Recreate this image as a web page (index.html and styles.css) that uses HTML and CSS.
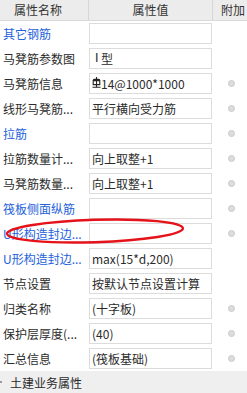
FILE: index.html
```html
<!DOCTYPE html>
<html>
<head>
<meta charset="utf-8">
<link rel="stylesheet" href="styles.css">
</head>
<body>
<div class="panel">
  <div class="head">
    <div class="hc hc-name">属性名称</div>
    <div class="hc hc-val">属性值</div>
    <div class="hc hc-ext">附加</div>
  </div>
  <div class="row"><div class="name blue">其它钢筋</div><div class="val"></div><div class="ext"></div></div>
  <div class="row"><div class="name">马凳筋参数图</div><div class="val"><span class="roman">Ⅰ</span>型</div><div class="ext"></div></div>
  <div class="row"><div class="name">马凳筋信息</div><div class="val"><svg class="bar" width="9" height="11" viewBox="0 0 9 11"><path d="M4.5 0V10.5M0.5 10.2H8.5M1.2 3.6V7.6H7.8V3.6ZM1.2 3.6Q1.2 2.4 2.4 2.4H6.6Q7.8 2.4 7.8 3.6" fill="none" stroke="#222" stroke-width="1.1"/></svg>14@1000*1000</div><div class="ext"><i class="dot"></i></div></div>
  <div class="row"><div class="name">线形马凳筋...</div><div class="val">平行横向受力筋</div><div class="ext"><i class="dot"></i></div></div>
  <div class="row"><div class="name blue">拉筋</div><div class="val"></div><div class="ext"><i class="dot"></i></div></div>
  <div class="row"><div class="name">拉筋数量计...</div><div class="val">向上取整+1</div><div class="ext"><i class="dot"></i></div></div>
  <div class="row"><div class="name">马凳筋数量...</div><div class="val">向上取整+1</div><div class="ext"><i class="dot"></i></div></div>
  <div class="row"><div class="name blue">筏板侧面纵筋</div><div class="val"></div><div class="ext"><i class="dot"></i></div></div>
  <div class="row"><div class="name blue">U形构造封边...</div><div class="val"></div><div class="ext"><i class="dot"></i></div></div>
  <div class="row"><div class="name blue">U形构造封边...</div><div class="val">max(15*d,200)</div><div class="ext"></div></div>
  <div class="row"><div class="name">节点设置</div><div class="val">按默认节点设置计算</div><div class="ext"></div></div>
  <div class="row"><div class="name">归类名称</div><div class="val">(十字板)</div><div class="ext"><i class="dot"></i></div></div>
  <div class="row"><div class="name">保护层厚度(...</div><div class="val">(40)</div><div class="ext"><i class="dot"></i></div></div>
  <div class="row"><div class="name">汇总信息</div><div class="val">(筏板基础)</div><div class="ext"><i class="dot"></i></div></div>
  <div class="group"><i class="gdot"></i><span>土建业务属性</span></div>
  <svg class="mark" width="247" height="393" viewBox="0 0 247 393"><ellipse cx="95" cy="231" rx="88" ry="11.2" transform="rotate(-1.8 95 231)" fill="none" stroke="#e5121a" stroke-width="2.4"/></svg>
</div>
</body>
</html>
```
FILE: styles.css
```css
html, body {
  margin: 0;
  padding: 0;
  background: #ffffff;
}
body {
  width: 247px;
  height: 393px;
  overflow: hidden;
  font-family: "Noto Sans CJK SC", "Microsoft YaHei", sans-serif;
  font-size: 12px;
  color: #2b2b2b;
}
.panel {
  position: relative;
  width: 247px;
  height: 393px;
  overflow: hidden;
}
.head {
  display: grid;
  grid-template-columns: 89px 124px 1fr;
  height: 20px;
  background: #ececec;
  border-bottom: 1px solid #d9d9d9;
}
.hc {
  line-height: 20px;
  white-space: nowrap;
  overflow: hidden;
  color: #333;
}
.hc-name {
  padding-left: 14px;
  border-right: 1px solid #d6d6d6;
}
.hc-val {
  text-align: center;
  border-right: 1px solid #d6d6d6;
}
.hc-ext {
  padding-left: 8px;
}
.row {
  display: grid;
  grid-template-columns: 89px 123px 1fr;
  height: 25px;
}
.name {
  padding-left: 3px;
  line-height: 25px;
  white-space: nowrap;
  overflow: hidden;
}
.blue {
  color: #2461db;
}
.val {
  box-sizing: border-box;
  margin-top: 2px;
  height: 21px;
  border: 1px solid #dcdcdc;
  background: #fff;
  padding-left: 2px;
  line-height: 19px;
  white-space: nowrap;
  overflow: hidden;
  display: flex;
  align-items: center;
}
.roman {
  font-family: "Liberation Serif", serif;
  padding-left: 3px;
  padding-right: 2px;
}
.bar {
  margin-right: 0;
  margin-bottom: 2px;
}
.ext {
  display: flex;
  align-items: center;
  padding-left: 16px;
}
.dot {
  display: block;
  width: 7px;
  height: 7px;
  box-sizing: border-box;
  border-radius: 50%;
  background: #dddddd;
  border: 1px solid #cacaca;
}
.group {
  display: flex;
  align-items: center;
  height: 22px;
  background: #efefef;
}
.gdot {
  display: block;
  width: 2px;
  height: 2px;
  background: #9a9a9a;
  margin-left: 0;
  margin-right: 8px;
}
.group span {
  color: #2b2b2b;
}
.mark {
  position: absolute;
  left: 0;
  top: 0;
  pointer-events: none;
}
```
